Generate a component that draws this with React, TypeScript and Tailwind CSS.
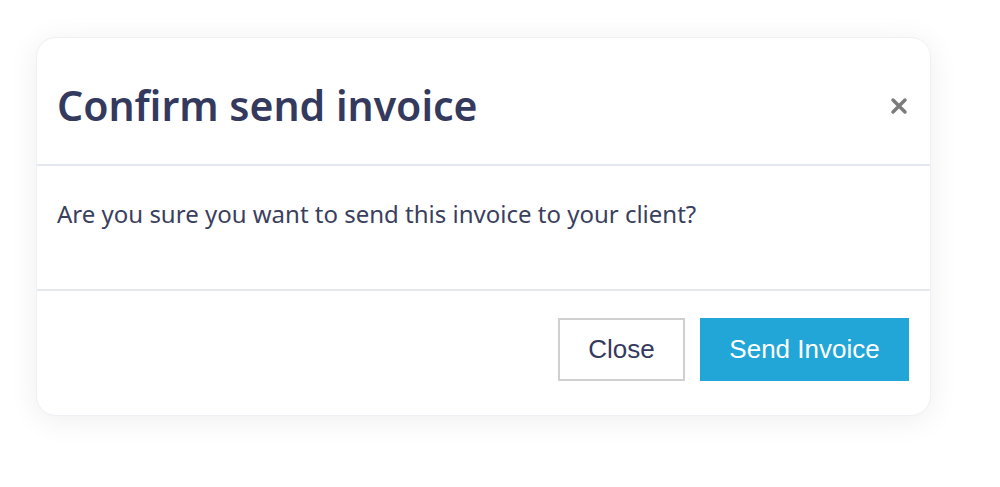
export default function App() {
  return (
    <div className="w-[1000px] h-[487px] bg-white pt-[37px] pl-[36px]">
      <div className="w-[895px] h-[379px] bg-white rounded-[20px] border border-[#eef0f4] shadow-[0_4px_30px_rgba(0,0,0,0.07)] flex flex-col overflow-hidden">
        <div className="h-[128px] flex items-start justify-between pl-[20px] pr-[22px] pt-[37px] border-b-2 border-[#e6e8f0]">
          <h1 className="text-[41px] leading-[60px] font-semibold text-[#34395e]" style={{ fontFamily: '"Noto Sans", "Open Sans", sans-serif' }}>
            Confirm send invoice
          </h1>
          <svg width="18" height="18" viewBox="0 0 18 18" className="mt-[22px]">
            <path d="M3 3 L15 15 M15 3 L3 15" stroke="#7b7b7b" strokeWidth="3.5" strokeLinecap="round" />
          </svg>
        </div>
        <div className="h-[125px] pl-[20px] pt-[30px] border-b-2 border-[#e6e8f0]">
          <p className="text-[24px] leading-[36px] text-[#3a3f5e]" style={{ fontFamily: '"Noto Sans", "Open Sans", sans-serif' }}>
            Are you sure you want to send this invoice to your client?
          </p>
        </div>
        <div className="flex-1 flex items-start justify-end gap-[15px] pr-[21px] pt-[27px]" style={{ fontFamily: '"Liberation Sans", Arial, sans-serif' }}>
          <button className="w-[127px] h-[63px] border-2 border-[#d0d0d0] bg-white text-[26px] text-[#34395e]">Close</button>
          <button className="w-[209px] h-[63px] bg-[#21a6d7] text-[26px] text-white">Send Invoice</button>
        </div>
      </div>
    </div>
  );
}
